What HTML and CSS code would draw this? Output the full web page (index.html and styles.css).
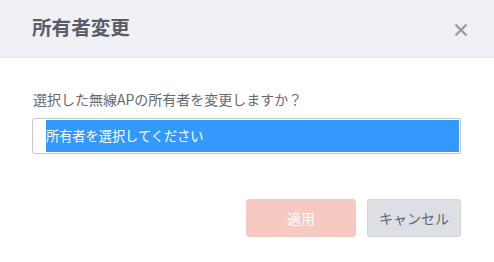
FILE: index.html
```html
<!DOCTYPE html>
<html lang="ja">
<head>
<meta charset="utf-8">
<link rel="stylesheet" href="styles.css">
</head>
<body>
<div class="modal">
  <div class="modal-header">
    <h1 class="modal-title">所有者変更</h1>
    <button class="close" aria-label="close">
      <svg width="14" height="14" viewBox="0 0 14 14"><path d="M1.5 1.5 L12.5 12.5 M12.5 1.5 L1.5 12.5" stroke="#9a9ca6" stroke-width="2.4" fill="none"/></svg>
    </button>
  </div>
  <div class="modal-body">
    <p class="message">選択した無線APの所有者を変更しますか？</p>
    <div class="select">
      <div class="option selected">所有者を選択してください</div>
    </div>
  </div>
  <div class="modal-footer">
    <button class="btn btn-primary">適用</button>
    <button class="btn btn-secondary">キャンセル</button>
  </div>
</div>
</body>
</html>
```
FILE: styles.css
```css
html, body {
  margin: 0;
  padding: 0;
  background: #ffffff;
}
body {
  font-family: "Noto Sans CJK JP", "Noto Sans", sans-serif;
  width: 494px;
  height: 262px;
  overflow: hidden;
}
.modal {
  display: flex;
  flex-direction: column;
}
.modal-header {
  height: 57px;
  background: #f0f1f5;
  border-bottom: 1px solid #e3e4e8;
  display: flex;
  align-items: center;
  justify-content: space-between;
  padding: 0 26px 0 32px;
  box-sizing: content-box;
}
.modal-title {
  margin: 0;
  font-size: 19.6px;
  font-weight: 700;
  color: #5a5d68;
  line-height: 1;
  padding-bottom: 4px;
}
.close {
  border: 0;
  background: none;
  padding: 0;
  width: 14px;
  height: 14px;
  display: flex;
  margin-top: 2px;
}
.modal-body {
  padding: 0 33px 0 32px;
}
.message {
  margin: 31px 0 0 1px;
  font-size: 14px;
  line-height: 20px;
  color: #666870;
}
.select {
  margin-top: 9px;
  height: 36px;
  border: 1px solid #c8c8c8;
  border-radius: 2px;
  box-sizing: border-box;
  padding: 1px 1px 1px 13px;
  display: flex;
}
.option {
  flex: 1;
  font-size: 13.2px;
  line-height: 32px;
  padding-left: 0;
  color: #ffffff;
}
.option.selected {
  background: #3399ff;
}
.modal-footer {
  display: flex;
  justify-content: flex-end;
  gap: 11px;
  padding: 45px 33px 0 0;
}
.btn {
  height: 38px;
  border-radius: 3px;
  font-family: "Noto Sans CJK JP", "Noto Sans", sans-serif;
  font-size: 14px;
  padding: 0;
}
.btn-primary {
  width: 110px;
  background: #f7c9c3;
  border: 1px solid #f7c9c3;
  color: #ffffff;
}
.btn-secondary {
  width: 94px;
  background: #dce0e4;
  border: 1px solid #cfd4d9;
  color: #63666f;
}
```
